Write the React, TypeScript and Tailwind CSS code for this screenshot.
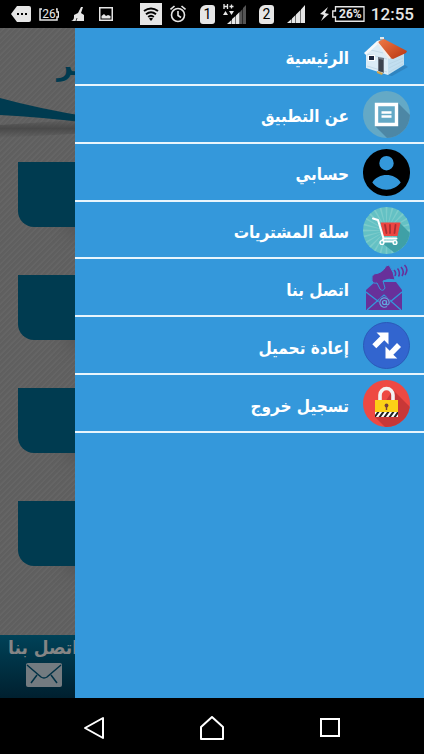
import type { ReactNode } from "react";

function HomeIcon() {
  return (
    <svg viewBox="0 0 47 47" className="size-[47px]" aria-hidden="true">
      <defs>
        <linearGradient id="roof" x1="0" y1="0" x2="1" y2="1">
          <stop offset="0" stopColor="#f07a45" />
          <stop offset="1" stopColor="#b53412" />
        </linearGradient>
      </defs>
      <path d="M24 42 L42 32 L45 34 L29 43Z" fill="#2a6fa5" opacity=".5" />
      <path d="M17 4h4v7h-4z" fill="#dfe8ee" />
      <path d="M17 6h4v2h-4z" fill="#9aa9b5" />
      <path d="M3 20 L15 9 L26 25 L25 42 L3 35Z" fill="#dcecf6" />
      <path d="M25 24 L41 19 L41 32 L25 42Z" fill="#c2dff0" />
      <path d="M4 33l20 6M4 21l20 5M8 17l12 3M26 31l14-6M26 35l14-7M26 39l14-8" stroke="#b3d0e1" strokeWidth=".6" />
      <path d="M1 20 L14 8 L17 7 L16 10 L3 22Z" fill="#f6f9fb" />
      <path d="M15 9 L21 6 L44 18 L43 20 L30 26 L27 25Z" fill="url(#roof)" />
      <path d="M15 9 L28 25 L26 26 L14 10Z" fill="#f7ece5" />
      <path d="M5 22h7v6H5z" fill="#fff" />
      <path d="M6 23h5v4H6z" fill="#1f2940" />
      <path d="M15 24l6 1v15l-6-2z" fill="#6d7581" />
      <path d="M16 26l4 1v12l-4-1z" fill="#3b424d" />
      <path d="M14 38l6 2-1 2-5-2z" fill="#d7a545" />
    </svg>
  );
}

function AboutIcon() {
  return (
    <svg viewBox="0 0 47 47" className="size-[47px]" aria-hidden="true">
      <clipPath id="aboutClip"><circle cx="23.5" cy="23.5" r="23.5" /></clipPath>
      <g clipPath="url(#aboutClip)">
        <path d="M0 0h47v47H0z" fill="#64a9c6" />
        <path d="M35 12 L59 36 L36 59 L12 35Z" fill="#4d87a5" />
        <path d="M13.5 13.5h20v20h-20z" fill="#64a9c6" stroke="#fff" strokeWidth="3.4" />
        <path d="M18.500 21.500h10M18.500 25.500h10" stroke="#fff" strokeWidth="2.600" />
      </g>
    </svg>
  );
}

function AccountIcon() {
  return (
    <svg viewBox="0 0 47 47" className="size-[47px]" aria-hidden="true">
      <path
        fillRule="evenodd"
        d="M23.500 0a23.500 23.500 0 1 0 0 47a23.500 23.500 0 1 0 0-47ZM23.500 7a7.200 7.200 0 1 1 0 14.400a7.200 7.200 0 1 1 0-14.400ZM9.300 33.500C12 28.500 18 26 23.500 26s11.500 2.500 14.200 7.500C34.500 38 29 40.700 23.500 40.700S12.500 38 9.300 33.500Z"
        fill="#000"
      />
    </svg>
  );
}

function CartIcon() {
  const rays = Array.from({ length: 24 }, (_, i) => i * 15);
  return (
    <svg viewBox="0 0 47 47" className="size-[47px]" aria-hidden="true">
      <clipPath id="cartClip"><circle cx="23.5" cy="23.5" r="23.5" /></clipPath>
      <g clipPath="url(#cartClip)">
        <path d="M0 0h47v47H0z" fill="#64c1c4" />
        {rays.map((angle) => (
          <path key={angle} d="M23.500 23.500 L22.500 -2 L24.500 -2Z" fill="#7ccbcb" transform={`rotate(${angle} 23.5 23.5)`} />
        ))}
        <path d="M37 16 L55 34 L42 54 L19 36 L33 33Z" fill="#3fa0a6" />
        <path d="M17.500 15.500h20L34.500 29H20.500z" fill="#ed4543" />
        <path d="M22 18l1.500 8M27 18v8M32.500 18l-1 8" stroke="#a92f33" strokeWidth="1.800" strokeLinecap="round" />
        <path d="M10 11.500l5 1.500 5.500 18.500h13M20.500 31.500l-1.500 3h14" fill="none" stroke="#fff" strokeWidth="2" strokeLinecap="round" strokeLinejoin="round" />
        <circle cx="19" cy="35.500" r="1.900" fill="#60bfc3" stroke="#fff" strokeWidth="1.400" />
        <circle cx="32" cy="35.500" r="1.900" fill="#60bfc3" stroke="#fff" strokeWidth="1.400" />
      </g>
    </svg>
  );
}

function ContactIcon() {
  return (
    <svg viewBox="0 0 47 47" className="size-[47px]" aria-hidden="true">
      <path d="M3 26 L12 18 L33 18 L39 26 L39 46 L3 46Z" fill="#68309a" />
      <path d="M3 28l13 10M39 28L27 38M4 46l17-15 17 15" fill="none" stroke="#3498db" strokeWidth="1.300" />
      <circle cx="21.500" cy="38.500" r="6" fill="#68309a" />
      <circle cx="21.500" cy="38.500" r="2" fill="none" stroke="#62a9df" strokeWidth="1.200" />
      <path d="M23.500 36.500v3.200c0 2 2.700 1.300 2.700-1.200a4.700 4.700 0 1 0-2.200 4" fill="none" stroke="#62a9df" strokeWidth="1.200" />
      <path d="M11 10Q20 9 23 2L26 1Q31 8 32 16Q26 14 20 17L22 24Q20 28 17 25L14 19Q10 20 9 16.500Q8 12 11 10Z" fill="#68309a" stroke="#3498db" strokeWidth="1" />
      <path d="M31 6c1.500 1.500 2 4 1 6M34.500 4.500c2 2 2.500 6 1 8M38 3c2.500 3 3 6 1 9M41.500 1c3 3 2.500 7 .5 10" fill="none" stroke="#68309a" strokeWidth="1.600" />
    </svg>
  );
}

function ReloadIcon() {
  return (
    <svg viewBox="0 0 47 47" className="size-[47px]" aria-hidden="true">
      <circle cx="23.500" cy="23.500" r="23" fill="#3265cf" stroke="#2b59b8" />
      <path d="M13.500 10.500h12v12l-4.200-4.200-8 8-4-4 8-8Z" fill="#fff" />
      <path d="M22.500 36.500v-12l4.200 4.200 7.300-7.700 4 4-7.700 7.700 4 3.800Z" fill="#fff" />
    </svg>
  );
}

function LockIcon() {
  return (
    <svg viewBox="0 0 47 47" className="size-[47px]" aria-hidden="true">
      <clipPath id="lockClip"><circle cx="23.5" cy="23.500" r="23.500" /></clipPath>
      <clipPath id="stripeClip"><path d="M12 32h23v5H12z" /></clipPath>
      <g clipPath="url(#lockClip)">
        <path d="M0 0h47v47H0z" fill="#ee4943" />
        <path d="M30 10L58 38 40 65 12 37Z" fill="#c83737" />
        <path d="M17 21v-6a6.500 6.500 0 0 1 13 0v6" fill="none" stroke="#f3f3f3" strokeWidth="3.600" />
        <path d="M12 20h23v12H12z" fill="#fcd116" />
        <path d="M12 32h23v5H12z" fill="#fff" />
        <g clipPath="url(#stripeClip)">
          <path d="M11 38l5-7M16 38l5-7M21 38l5-7M26 38l5-7M31 38l5-7" stroke="#222" strokeWidth="2" />
        </g>
        <circle cx="23.500" cy="25.500" r="1.900" fill="#75403a" />
        <path d="M22.800 26h1.400v4h-1.400z" fill="#75403a" />
      </g>
    </svg>
  );
}

const menu: { label: string; icon: ReactNode }[] = [
  { label: "الرئيسية", icon: <HomeIcon /> },
  { label: "عن التطبيق", icon: <AboutIcon /> },
  { label: "حسابي", icon: <AccountIcon /> },
  { label: "سلة المشتريات", icon: <CartIcon /> },
  { label: "اتصل بنا", icon: <ContactIcon /> },
  { label: "إعادة تحميل", icon: <ReloadIcon /> },
  { label: "تسجيل خروج", icon: <LockIcon /> },
];

function SimCard({ children }: { children: ReactNode }) {
  return (
    <span className="flex h-[19px] w-[15px] items-center justify-center rounded-[3px] rounded-tl-md bg-[#e6e6e6] text-sm text-black">
      {children}
    </span>
  );
}

function StatusBar() {
  return (
    <header className="flex h-7 shrink-0 items-center justify-between bg-black pr-[10px] pl-[11px] font-[Roboto,sans-serif] text-[#e6e6e6]">
      <div className="flex items-center">
        <svg viewBox="0 0 20 16" className="h-4 w-5" aria-hidden="true">
          <path d="M6 0h12q2 0 2 2v12q0 2-2 2H6L0 8Z" fill="#e6e6e6" />
          <path d="M6 7h2v2H6zM10 7h2v2h-2zM14 7h2v2h-2z" fill="#000" />
        </svg>
        <span className="relative ml-2 flex h-5 w-5 items-center justify-center text-xs">
          <svg viewBox="0 0 20 20" className="absolute inset-0 size-5" aria-hidden="true">
            <path d="M3 5H1v11h17v-3h1.500V8H18V5h-1" fill="none" stroke="#e6e6e6" strokeWidth="1.500" />
          </svg>
          <span className="relative leading-5">26</span>
        </span>
        <svg viewBox="0 0 14 16" className="ml-3 h-4 w-3.5" aria-hidden="true">
          <path d="M10 1h2l-2 6 3 2v2H3V9l4-2ZM3 11h10v4H0q3-1 3-4Z" fill="#e6e6e6" />
          <path d="M6 12l-1 3" stroke="#000" strokeWidth=".7" />
        </svg>
        <svg viewBox="0 0 14 14" className="ml-3.5 size-3.5" aria-hidden="true">
          <path d="M.75.750h12.500v12.500H.750z" fill="none" stroke="#e6e6e6" strokeWidth="1.500" />
          <path d="M2.500 11.500V9l2.500-2 2 2 2-1 2.500 1v2.500Z" fill="#e6e6e6" />
        </svg>
      </div>
      <div className="flex items-center">
        <svg viewBox="0 0 22 22" className="size-[22px]" aria-hidden="true">
          <path d="M0 0h22v22H0z" fill="#e6e6e6" />
          <path d="M4 8q7-5 14 0M6 11.200q5-4 10 0M8.200 14q2.800-2.500 5.600 0" fill="none" stroke="#000" strokeWidth="2" />
          <path d="M9 15.500q2-1.500 4 0L11 18Z" fill="#000" />
        </svg>
        <svg viewBox="0 0 16 18" className="ml-2 h-[18px] w-4" fill="none" stroke="#e6e6e6" aria-hidden="true">
          <circle cx="8" cy="10" r="6.500" strokeWidth="1.600" />
          <path d="M8 6v4.500l3 2M.5 4.500L4.500 1M15.500 4.500l-4-3.500" strokeWidth="1.600" />
        </svg>
        <span className="ml-[14px]"><SimCard>1</SimCard></span>
        <svg viewBox="0 0 23 22" className="ml-2 h-[22px] w-[23px]" aria-hidden="true">
          <path d="M1 1v5M4.500 1v5M1 3.500h3.500M6.500 3.500h4M8.500 1.500v4" stroke="#e6e6e6" strokeWidth="1.300" />
          <path d="M0 12L2.500 8L5 12ZM6 8h5l-2.500 4Z" fill="#e6e6e6" />
          <path d="M4 21l4.500-4v4ZM9 16l3.500-3v8H9ZM13 12.500l3.500-3.500v12H13Z" fill="#e6e6e6" />
          <path d="M17 9l2.500-3v15H17ZM20 5l3-3v19h-3Z" fill="#555" />
        </svg>
        <span className="ml-[13px]"><SimCard>2</SimCard></span>
        <svg viewBox="0 0 18 18" className="ml-[13px] size-[18px]" aria-hidden="true">
          <path d="M0 18l4.500-4V18ZM5 13.500l3.500-3.500V18H5ZM9 9.500L13.500 5V18H9ZM14 4.500L18 0v18h-4Z" fill="#e6e6e6" />
        </svg>
        <svg viewBox="0 0 10 14" className="ml-[15px] h-3.5 w-2.5" aria-hidden="true">
          <path d="M8 0L0 7l4 1-3 6 8-7-4-1Z" fill="#e6e6e6" />
        </svg>
        <span className="relative ml-0.5 flex h-4 w-[33px] items-center justify-center pl-1 text-xs font-bold">
          <svg viewBox="0 0 33 16" className="absolute inset-0 h-4 w-[33px]" aria-hidden="true">
            <path d="M3.500.750h28.500v14.500H3.500V11H.750V5H3.500Z" fill="none" stroke="#e6e6e6" strokeWidth="1.300" />
          </svg>
          <span className="relative">26%</span>
        </span>
        <time className="ml-1.5 text-[17px] leading-5 font-medium">12:55</time>
      </div>
    </header>
  );
}

function PageBehind() {
  return (
    <div className="flex h-full flex-col overflow-hidden bg-[#606060] bg-[repeating-linear-gradient(135deg,#5f5f5f_0px,#5f5f5f_2px,#656565_3px,#656565_4px)]">
      <div className="flex h-[60px] shrink-0 items-end pl-[57px] text-3xl leading-[46px] font-bold text-[#003b50]">
        <span dir="rtl">فر</span>
      </div>
      <svg viewBox="0 0 424 74" preserveAspectRatio="xMinYMin slice" className="h-[74px] w-full shrink-0" aria-hidden="true">
        <defs>
          <linearGradient id="swooshShadow" x1="0" y1="0" x2="0" y2="1">
            <stop offset="0" stopColor="#444" stopOpacity="0" />
            <stop offset=".5" stopColor="#444" stopOpacity=".8" />
            <stop offset="1" stopColor="#444" stopOpacity="0" />
          </linearGradient>
        </defs>
        <path d="M0 10Q40 21 90 29V35Q40 29 0 27Z" fill="#003b50" />
        <path d="M0 37L90 31V45L0 50Z" fill="url(#swooshShadow)" />
      </svg>
      <div className="flex flex-col gap-12 pl-[18px]">
        {[0, 1, 2, 3].map((card) => (
          <div key={card} className="h-[65px] rounded-bl-2xl bg-[#003b50] shadow-[36px_20px_12px_-10px_#5a5a5a]" />
        ))}
      </div>
      <footer className="mt-auto flex h-[63px] shrink-0 flex-col items-start bg-linear-to-b from-[#004258] to-[#00202f] pl-2 text-[#858585]">
        <span className="text-[19px] leading-6 font-bold" dir="rtl">اتصل بنا</span>
        <svg viewBox="0 0 36 24" className="mt-1 ml-[18px] h-6 w-9" aria-hidden="true">
          <rect width="36" height="24" rx="2" fill="#737b80" />
          <path d="M1 2l14 12q3 2 6 0L35 2M5 20l6-8M31 20l-6-8" fill="none" stroke="#003145" strokeWidth="1.500" />
        </svg>
      </footer>
    </div>
  );
}

export default function App() {
  return (
    <div className="flex h-screen flex-col bg-black font-['DejaVu_Sans_Condensed','DejaVu_Sans',sans-serif]">
      <StatusBar />
      <main className="relative min-h-0 flex-1">
        <PageBehind />
        <nav dir="rtl" className="absolute inset-y-0 right-0 left-[75px] bg-[#3498db]">
          <ul className="flex h-[405px] flex-col">
            {menu.map((item) => (
              <li key={item.label} className="flex-1 border-b-2 border-[#e8f5fd]">
                <a href="#" className="flex h-full items-center gap-[14px] px-[14px] pt-px text-[17px] leading-6 font-bold text-white">
                  {item.icon}
                  <span className="pt-1">{item.label}</span>
                </a>
              </li>
            ))}
          </ul>
        </nav>
      </main>
      <footer className="flex h-14 shrink-0 items-center justify-between bg-black px-[82px] pt-1">
        <button type="button" aria-label="Back">
          <svg viewBox="0 0 24 24" className="size-6" fill="none" stroke="#fff" strokeWidth="2" strokeLinejoin="round">
            <path d="M21 2v20L3 12Z" />
          </svg>
        </button>
        <button type="button" aria-label="Home">
          <svg viewBox="0 0 24 24" className="size-6" fill="none" stroke="#fff" strokeWidth="2" strokeLinejoin="round">
            <path d="M1 23V11L12 1l11 10v12Z" />
          </svg>
        </button>
        <button type="button" aria-label="Recent apps">
          <svg viewBox="0 0 24 24" className="size-6" fill="none" stroke="#fff" strokeWidth="2">
            <path d="M3 3h18v17H3Z" />
          </svg>
        </button>
      </footer>
    </div>
  );
}
